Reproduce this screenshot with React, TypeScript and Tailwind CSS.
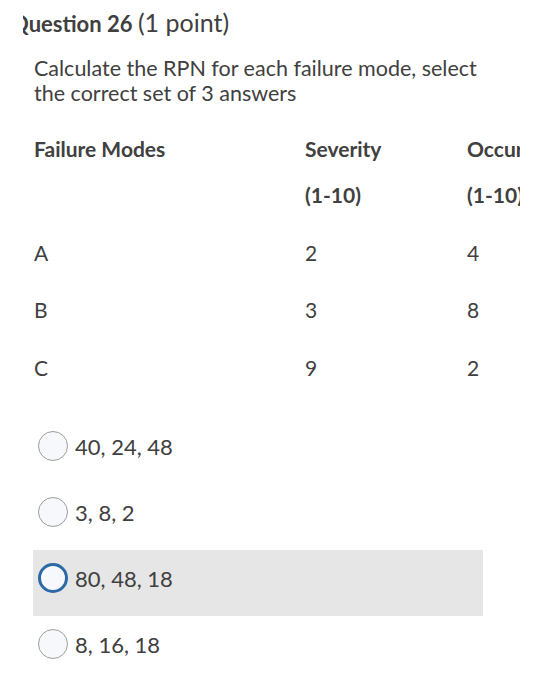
import React from "react";

const rows = [
  { m: "A", s: "2", o: "4", mt: "mt-[33px]" },
  { m: "B", s: "3", o: "8", mt: "mt-[32px]" },
  { m: "C", s: "9", o: "2", mt: "mt-[33px]" },
];

const options = [
  { label: "40, 24, 48", selected: false },
  { label: "3, 8, 2", selected: false },
  { label: "80, 48, 18", selected: true },
  { label: "8, 16, 18", selected: false },
];

export default function App() {
  return (
    <div className="w-[542px] h-[700px] bg-white font-['Lato','Noto_Sans',sans-serif] text-[#404040] overflow-hidden">
      <div className="ml-[23px] overflow-hidden pt-[7px]">
        <h2 className="-ml-[12px] whitespace-nowrap text-[25px] leading-[30px]">
          <span className="text-[22px] font-bold">Question 26 </span>
          <span className="font-normal">(1 point)</span>
        </h2>
      </div>
      <div className="pl-[34px] pt-[17px]">
        <p className="text-[21.5px] leading-[25px] w-[480px]">
          Calculate the RPN for each failure mode, select
          <br />
          the correct set of 3 answers
        </p>
      </div>
      <div className="ml-[34px] w-[486px] overflow-hidden mt-[30px] text-[21px] leading-[25px]">
        <div className="grid grid-cols-[271px_162px_200px] w-[633px]">
          <div className="font-bold">Failure Modes</div>
          <div className="font-bold">
            <div>Severity</div>
            <div className="mt-[21px]">(1-10)</div>
          </div>
          <div className="font-bold whitespace-nowrap">
            <div>Occurrence</div>
            <div className="mt-[21px]">(1-10)</div>
          </div>
          {rows.map((r) => (
            <React.Fragment key={r.m}>
              <div className={r.mt}>{r.m}</div>
              <div className={r.mt}>{r.s}</div>
              <div className={r.mt}>{r.o}</div>
            </React.Fragment>
          ))}
        </div>
      </div>
      <div className="ml-[33px] w-[450px] mt-[38px] flex flex-col">
        {options.map((o) => (
          <div
            key={o.label}
            className={`h-[66px] flex items-center pb-[10px] pl-[5px] ${o.selected ? "bg-[#e6e6e6]" : ""}`}
          >
            <span
              className={`w-[30px] h-[30px] rounded-full shrink-0 bg-[#f6f8fb] ${
                o.selected ? "border-[3px] border-[#2b6aa6]" : "border border-[#9c9c9c]"
              }`}
            />
            <span className="ml-[7px] text-[22px] leading-[25px]">{o.label}</span>
          </div>
        ))}
      </div>
    </div>
  );
}
